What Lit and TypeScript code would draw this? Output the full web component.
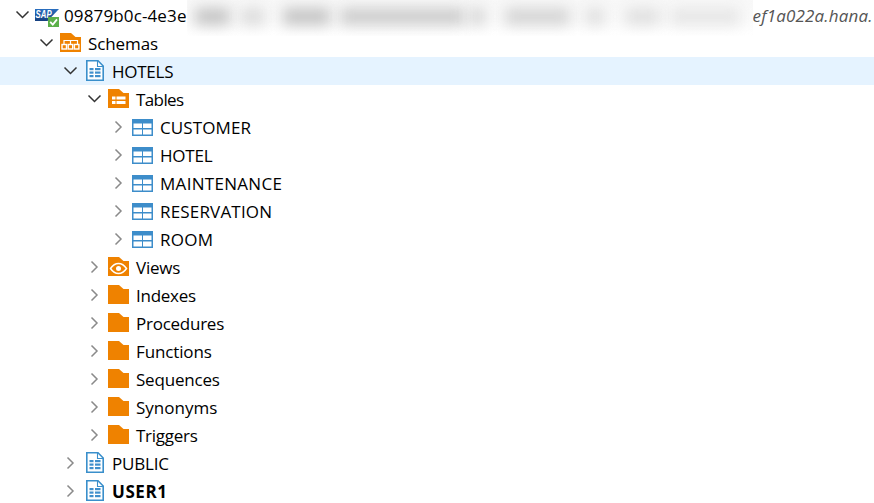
import { LitElement, html, css, svg } from "lit";
import { customElement } from "lit/decorators.js";

type Kind = "sap" | "schemas" | "schema" | "tables" | "table" | "views" | "folder";
interface Row { level: number; open: boolean; icon: Kind; label: string; track?: number; selected?: boolean; bold?: boolean; server?: boolean; }

const ROWS: Row[] = [
  { level: 0, open: true, icon: "sap", label: "09879b0c-4e3e", track: 0.13, server: true },
  { level: 1, open: true, icon: "schemas", label: "Schemas", track: -0.1 },
  { level: 2, open: true, icon: "schema", label: "HOTELS", selected: true },
  { level: 3, open: true, icon: "tables", label: "Tables", track: -0.6 },
  { level: 4, open: false, icon: "table", label: "CUSTOMER", track: 0.12 },
  { level: 4, open: false, icon: "table", label: "HOTEL", track: -0.2 },
  { level: 4, open: false, icon: "table", label: "MAINTENANCE", track: 0.3 },
  { level: 4, open: false, icon: "table", label: "RESERVATION", track: 0.18 },
  { level: 4, open: false, icon: "table", label: "ROOM", track: 0.25 },
  { level: 3, open: false, icon: "views", label: "Views" },
  { level: 3, open: false, icon: "folder", label: "Indexes" },
  { level: 3, open: false, icon: "folder", label: "Procedures" },
  { level: 3, open: false, icon: "folder", label: "Functions", track: -0.13 },
  { level: 3, open: false, icon: "folder", label: "Sequences", track: -0.2 },
  { level: 3, open: false, icon: "folder", label: "Synonyms", track: 0 },
  { level: 3, open: false, icon: "folder", label: "Triggers" },
  { level: 2, open: false, icon: "schema", label: "PUBLIC", track: -0.2 },
  { level: 2, open: false, icon: "schema", label: "USER1", track: 0.55, bold: true },
];

const SMEARS: [number, number, string][] = [
  [8, 35, "#c4c4c4"],
  [53, 25, "#dcdcdc"],
  [96, 47, "#c4c4c4"],
  [153, 125, "#cccccc"],
  [283, 15, "#d4d4d4"],
  [318, 65, "#d4d4d4"],
  [398, 20, "#e0e0e0"],
  [438, 35, "#e0e0e0"],
  [483, 70, "#e6e6e6"],
];

const OR = "#ef8200";
const BL = "#3a8fcb";
const FOLDER = "M4 4H15L19.5 8H25V23H4Z";

function glyph(k: Kind) {
  switch (k) {
    case "sap":
      return svg`
        <defs><linearGradient id="sapg" x1="0" y1="0" x2="0" y2="1"><stop offset="0" stop-color="#2a6fc0"/><stop offset="1" stop-color="#16407f"/></linearGradient></defs>
        <path d="M3 8H27L15.5 20H3Z" fill="url(#sapg)"/>
        <text x="3.6" y="17" font-family="Liberation Sans" font-weight="700" font-style="italic" font-size="10" fill="#fff" textLength="16" lengthAdjust="spacingAndGlyphs">SAP</text>
        <rect x="16" y="16" width="11" height="10" fill="#5cb04a"/>
        <path d="M18.2 20.8L20.8 23.6L25 18.4" fill="none" stroke="#fff" stroke-width="1.8"/>`;
    case "schemas":
      return svg`
        <path d="${FOLDER}" fill="${OR}"/>
        <path d="M8 15V11.5H21.5V15M14.5 11.5V15" fill="none" stroke="#fff" stroke-width="1.2"/>
        <rect x="6" y="15.5" width="4.5" height="4.5" fill="none" stroke="#fff" stroke-width="1.4"/>
        <rect x="12.2" y="15.5" width="4.5" height="4.5" fill="none" stroke="#fff" stroke-width="1.4"/>
        <rect x="18.4" y="15.5" width="4.5" height="4.5" fill="none" stroke="#fff" stroke-width="1.4"/>`;
    case "schema":
      return svg`
        <path d="M6.8 3.8H18L23.2 9V23.2H6.8Z" fill="#fff" stroke="${BL}" stroke-width="1.6"/>
        <path d="M17.5 4V9.5H23" fill="none" stroke="${BL}" stroke-width="1.1"/>
        <g fill="#3f8fcc">
          <rect x="9.5" y="11" width="4" height="2.2"/><rect x="9.5" y="14.5" width="4" height="2.2"/><rect x="9.5" y="18" width="4" height="2.2"/>
          <rect x="15" y="11" width="5.5" height="2.2"/><rect x="15" y="14.5" width="5.5" height="2.2"/><rect x="15" y="18" width="5.5" height="2.2"/>
        </g>`;
    case "tables":
      return svg`
        <path d="${FOLDER}" fill="${OR}"/>
        <rect x="8" y="11.5" width="3.5" height="3" fill="#fff"/><rect x="12.5" y="11.5" width="9" height="3" fill="#fff"/>
        <rect x="8" y="16" width="3.5" height="3" fill="#fff"/><rect x="12.5" y="16" width="9" height="3" fill="#fff"/>`;
    case "table":
      return svg`
        <rect x="4" y="6" width="21" height="17" fill="#3d8dca"/>
        <rect x="5.5" y="10.5" width="8.5" height="4.5" fill="#fff"/><rect x="15" y="10.5" width="8.5" height="4.5" fill="#fff"/>
        <rect x="5.5" y="16.5" width="8.5" height="5" fill="#fff"/><rect x="15" y="16.5" width="8.5" height="5" fill="#fff"/>`;
    case "views":
      return svg`
        <path d="${FOLDER}" fill="${OR}"/>
        <path d="M6.5 15.5C9 11.8 12 10.5 14.5 10.5S20 11.8 22.5 15.5C20 19.2 17 20.5 14.5 20.5S9 19.2 6.5 15.5Z" fill="none" stroke="#fff" stroke-width="1.5"/>
        <circle cx="14.5" cy="15.5" r="2.5" fill="#fff"/>`;
    default:
      return svg`<path d="${FOLDER}" fill="${OR}"/>`;
  }
}

@customElement("app-root")
export class AppRoot extends LitElement {
  static styles = css`
    :host { display: block; width: 874px; height: 503px; overflow: hidden; background: #fff; padding-top: 1px; box-sizing: border-box;
      font-family: "Open Sans", "Noto Sans", sans-serif; font-size: 17px; color: #000; }
    .row { display: flex; align-items: center; height: 28px; white-space: nowrap; }
    .row.selected { background: #e5f3ff; }
    .chev { width: 18px; height: 28px; flex: none; }
    .icon { width: 30px; height: 28px; flex: none; }
    .label { margin-left: 2px; letter-spacing: -0.25px; }
    .label.bold { font-weight: 700; }
    .mask { position: relative; flex: none; align-self: flex-start; width: 566px; height: 36px; margin-top: -1px;
      background: linear-gradient(#f8f8f8, #fbfbfb 55%, #fff); overflow: hidden; }
    .smear { position: absolute; top: 8px; height: 17px; filter: blur(7px); }
    .host-tail { font-style: italic; color: #555; letter-spacing: 0.17px; }
  `;

  private chevron(open: boolean) {
    return html`<svg class="chev" viewBox="0 0 18 28">
      ${open
        ? svg`<path d="M2.5 10.5L8.5 16.5L14.5 10.5" fill="none" stroke="#333" stroke-width="1.5"/>`
        : svg`<path d="M5.5 8.5L11 14L5.5 19.5" fill="none" stroke="#8a8a8a" stroke-width="1.5"/>`}
    </svg>`;
  }

  render() {
    return ROWS.map((r) => html`
      <div class="row ${r.selected ? "selected" : ""}" style="padding-left:${14 + 24 * r.level}px">
        ${this.chevron(r.open)}
        <svg class="icon" viewBox="0 0 30 28">${glyph(r.icon)}</svg>
        <span class="label ${r.bold ? "bold" : ""}" style=${r.track !== undefined ? `letter-spacing:${r.track}px` : ""}>${r.label}</span>
        ${r.server
          ? html`<div class="mask">
                ${SMEARS.map(([l, w, c]) => html`<i class="smear" style="left:${l}px;width:${w}px;background:${c}"></i>`)}
              </div>
              <span class="host-tail">ef1a022a.hana.</span>`
          : ""}
      </div>`);
  }
}
